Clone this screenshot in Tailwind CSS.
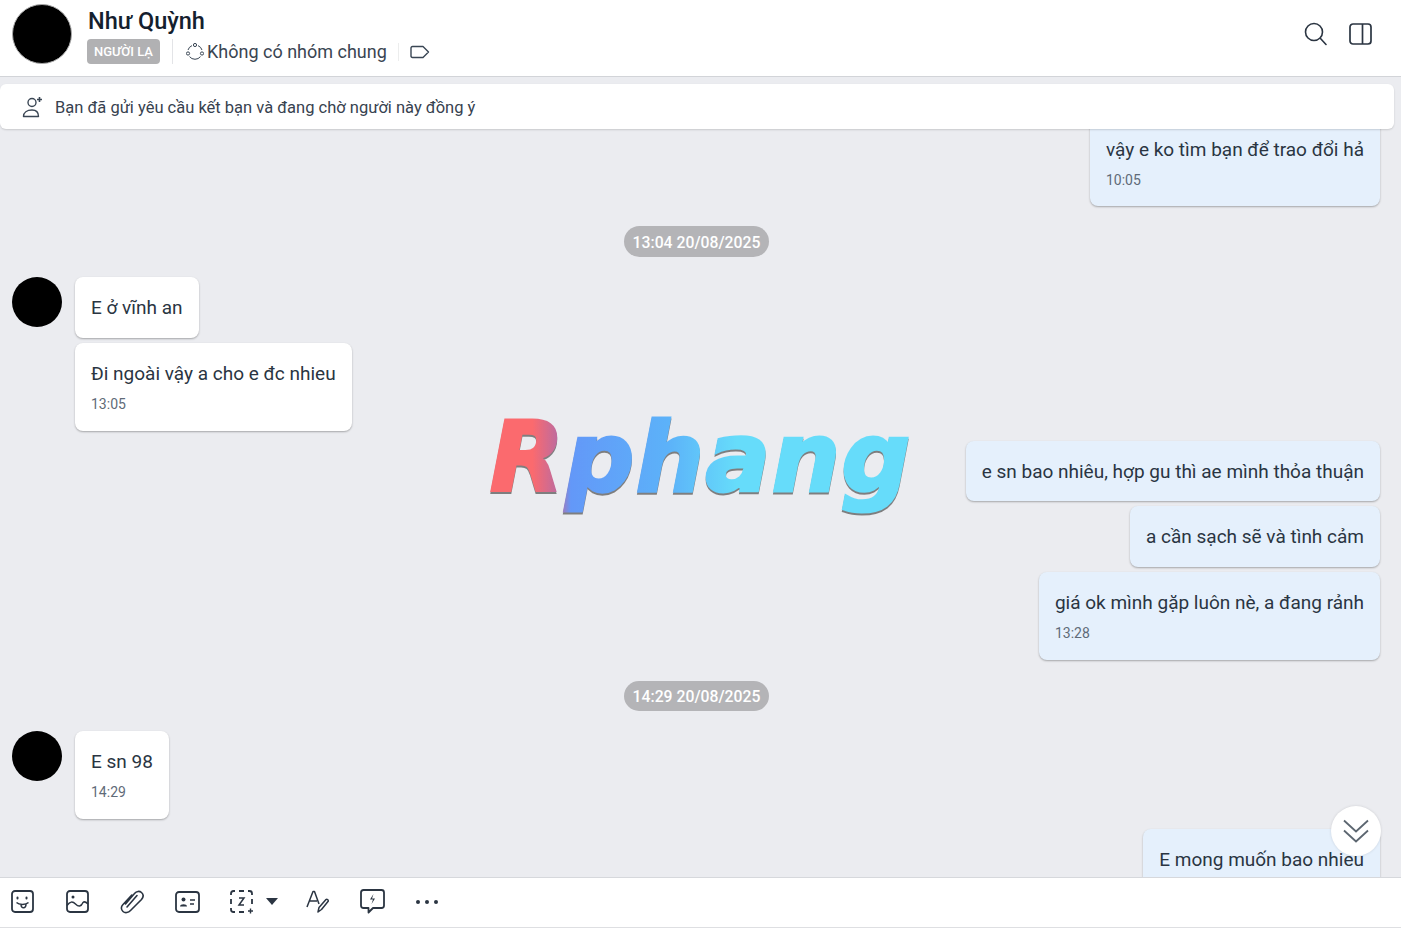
<!DOCTYPE html>
<html lang="vi">
<head>
  <meta charset="UTF-8">
  <title>Như Quỳnh</title>
  <script src="https://cdn.jsdelivr.net/npm/@tailwindcss/browser@4"></script>
</head>
<body class="h-[933px] w-[1401px] overflow-hidden bg-white font-['Roboto',sans-serif] text-[#2a3542]">
  <div class="flex h-[933px] flex-col">
    <!-- header -->
    <header class="flex h-[77px] shrink-0 items-start border-b border-[#d2d4d8] bg-white pl-3 pr-[29px]">
      <div class="mt-1 h-[60px] w-[60px] shrink-0 rounded-full border border-[#a8a8a8] bg-black"></div>
      <div class="ml-[15px] flex-1">
        <div class="mt-[6px] ml-px h-[30px] text-[23.500px] font-medium leading-[30px] text-[#14202e]">Như Quỳnh</div>
        <div class="mt-[3px] flex h-[25px] items-center">
          <span class="flex h-[25px] w-[73px] items-center justify-center rounded bg-[#b1b1b3] text-[13px] font-medium text-white">NGƯỜI LẠ</span>
          <span class="ml-3 h-[25px] w-px bg-[#e3e4e7]"></span>
          <svg class="ml-[13px]" width="18" height="18" viewBox="0 0 18 18" fill="none" stroke="#3a4654" stroke-width="1"><path d="M6 2.6A7 7 0 0 0 2 7M12 2.6A7 7 0 0 1 16 7M3.5 13.6A7 7 0 0 0 14.500 13.600"/><circle cx="9" cy="2" r="1.600"/><circle cx="2" cy="10.500" r="1.600"/><circle cx="16" cy="10.500" r="1.600"/></svg>
          <span class="ml-[3px] text-[18px] leading-[25px] text-[#3a4552]">Không có nhóm chung</span>
          <span class="ml-[11px] h-[18px] w-px bg-[#eceded]"></span>
          <svg class="ml-[11px]" width="20" height="14" viewBox="0 0 20 14" fill="none" stroke="#3a4654" stroke-width="1.400" stroke-linejoin="round"><path d="M2.500 1.500H13L18.500 7L13 12.500H2.500Q1 12.500 1 11V3Q1 1.500 2.500 1.500Z"/></svg>
        </div>
      </div>
      <div class="mt-[22px] flex items-center gap-[22px]">
        <svg width="23" height="24" viewBox="0 0 23 24" fill="none" stroke="#2b3542" stroke-width="1.600" stroke-linecap="round"><circle cx="10" cy="10" r="8.500"/><path d="M16.500 16.500L22 22.500"/></svg>
        <svg width="23" height="22" viewBox="0 0 23 22" fill="none" stroke="#2b3542" stroke-width="1.700"><rect x="1" y="1" width="21" height="20" rx="3"/><path d="M13.500 1V21"/></svg>
      </div>
    </header>

    <!-- chat -->
    <main class="relative min-h-0 flex-1 overflow-hidden bg-[#ebecf0]">
      <div class="flex flex-col items-stretch pl-3 pr-[21px] pt-[41px] text-[19px]">
        <div class="flex justify-end">
          <div class="h-[88px] rounded-lg bg-[#e5f0fc] px-4 pt-[20px] shadow-[0_1px_2px_rgba(0,0,0,0.3)]">
            <div class="leading-6">vậy e ko tìm bạn để trao đổi hả</div>
            <div class="mt-[8px] text-[14px] leading-5 text-[#5f6b78]">10:05</div>
          </div>
        </div>
        <div class="mt-5 flex justify-center pl-[1px]"><span class="flex h-[31px] w-[145px] items-center justify-center rounded-full bg-[#b4b4b7] pt-[2px] text-[15.750px] font-medium text-white">13:04 20/08/2025</span></div>
        <div class="mt-5 flex gap-[13px]">
          <div class="h-[50px] w-[50px] shrink-0 rounded-full bg-black"></div>
          <div class="flex flex-col items-start gap-[5px]">
            <div class="h-[61px] rounded-lg bg-white px-4 pt-[19px] leading-6 shadow-[0_1px_2px_rgba(0,0,0,0.3)]">E ở vĩnh an</div>
            <div class="h-[88px] rounded-lg bg-white px-4 pt-[19px] shadow-[0_1px_2px_rgba(0,0,0,0.3)]">
              <div class="leading-6">Đi ngoài vậy a cho e đc nhieu</div>
              <div class="mt-[8px] text-[14px] leading-5 text-[#5f6b78]">13:05</div>
            </div>
          </div>
        </div>
        <div class="mt-[10px] flex flex-col items-end gap-[5px]">
          <div class="h-[60px] rounded-lg bg-[#e5f0fc] px-4 pt-[19px] leading-6 shadow-[0_1px_2px_rgba(0,0,0,0.3)]">e sn bao nhiêu, hợp gu thì ae mình thỏa thuận</div>
          <div class="h-[61px] rounded-lg bg-[#e5f0fc] px-4 pt-[19px] leading-6 shadow-[0_1px_2px_rgba(0,0,0,0.3)]">a cần sạch sẽ và tình cảm</div>
          <div class="h-[88px] rounded-lg bg-[#e5f0fc] px-4 pt-[19px] shadow-[0_1px_2px_rgba(0,0,0,0.3)]">
            <div class="leading-6">giá ok mình gặp luôn nè, a đang rảnh</div>
            <div class="mt-[8px] text-[14px] leading-5 text-[#5f6b78]">13:28</div>
          </div>
        </div>
        <div class="mt-[21px] flex justify-center pl-[1px]"><span class="flex h-[30px] w-[145px] items-center justify-center rounded-full bg-[#b4b4b7] pt-px text-[15.750px] font-medium text-white">14:29 20/08/2025</span></div>
        <div class="mt-5 flex gap-[13px]">
          <div class="h-[50px] w-[50px] shrink-0 rounded-full bg-black"></div>
          <div class="h-[88px] rounded-lg bg-white px-4 pt-[19px] shadow-[0_1px_2px_rgba(0,0,0,0.3)]">
            <div class="leading-6">E sn 98</div>
            <div class="mt-[8px] text-[14px] leading-5 text-[#5f6b78]">14:29</div>
          </div>
        </div>
        <div class="mt-[10px] flex justify-end">
          <div class="h-[88px] rounded-lg bg-[#e5f0fc] px-4 pt-[19px] shadow-[0_1px_2px_rgba(0,0,0,0.3)]">
            <div class="leading-6">E mong muốn bao nhieu</div>
          </div>
        </div>
      </div>

      <!-- friend request banner -->
      <div class="absolute left-0 top-[7px] flex h-[45px] w-[1394px] items-center rounded-md bg-white pl-[22px] shadow-[0_1px_2px_rgba(0,0,0,0.15)]">
        <svg width="22" height="22" viewBox="0 0 22 22" fill="none" stroke="#3a4654" stroke-width="1.400"><circle cx="10" cy="6.500" r="4"/><path d="M1.500 20.500C1.500 16.500 5 14 10 14S16.500 16.500 16.500 20.500Z" stroke-linejoin="round"/><path d="M17.500 1V6M15 3.500H20" stroke-width="1.600"/></svg>
        <span class="ml-[11px] pt-[3px] text-[16.500px] text-[#37424f]">Bạn đã gửi yêu cầu kết bạn và đang chờ người này đồng ý</span>
      </div>

      <!-- watermark -->
      <div class="pointer-events-none absolute left-[490px] top-[316px] w-[425px] whitespace-nowrap bg-[linear-gradient(to_right,#fb6a6e_0%,#fb6a6e_10%,#bd6b9f_16%,#6398f8_19%,#5cb2f9_42%,#66dcfa_58%,#66dcfa_100%)] bg-clip-text font-['DejaVu_Sans',sans-serif] text-[96px] font-bold italic leading-[130px] tracking-[1.500px] text-transparent drop-shadow-[0_2px_0_rgba(90,90,90,0.75)] [-webkit-text-stroke:3px_transparent]">Rphang</div>

      <!-- scroll to bottom -->
      <button class="absolute left-[1331px] top-[729px] flex h-[50px] w-[50px] items-center justify-center rounded-full bg-white shadow-[0_0_3px_rgba(0,0,0,0.12)]">
        <svg width="26" height="26" viewBox="0 0 26 26" fill="none" stroke="#5c6670" stroke-width="1.800"><path d="M1 2.500L13 13.500L25 2.500M1 12.500L13 23.500L25 12.500"/></svg>
      </button>
    </main>

    <!-- toolbar -->
    <div class="flex h-[51px] shrink-0 items-center gap-[11px] border-t border-b border-t-[#d6d8dc] border-b-[#dedfe2] bg-white pb-[2px]">
      <button class="flex w-[44px] justify-center">
        <svg width="23" height="23" viewBox="0 0 23 23" fill="none" stroke="#2b3542" stroke-width="1.800"><rect x="1" y="1" width="21" height="21" rx="3"/><path d="M6.500 7.500V8.500M15.500 7.500V8.500" stroke-linecap="round" stroke-width="2"/><path d="M5.500 12.500C8 15 15 15 17.500 12.500M10 14.500C10 19 15 19 15 14" stroke-width="1.500"/></svg>
      </button>
      <button class="flex w-[44px] justify-center">
        <svg width="23" height="23" viewBox="0 0 23 23" fill="none" stroke="#2b3542" stroke-width="1.800"><rect x="1" y="1" width="21" height="21" rx="3"/><circle cx="7" cy="7" r="1.500" fill="#2b3542" stroke="none"/><path d="M1 15.500C4 11.500 6.500 11 9.500 14S15 17 17 12.500C18.500 11 20.500 12.500 22 14" stroke-width="1.500"/></svg>
      </button>
      <button class="flex w-[44px] justify-center">
        <svg width="24" height="24" viewBox="0 0 24 24" fill="none" stroke="#2b3542" stroke-width="1.600" stroke-linecap="round" stroke-linejoin="round"><path d="M5.500 14L14.500 3.500C16.500 1 19.500 .8 21.500 2.500S23.500 7 21.500 9.500L10.500 20.500C8.500 22.800 5 23.300 3 21.500S.8 17 2.800 14.800L11.800 5"/><path d="M17 5.500L7 17"/></svg>
      </button>
      <button class="flex w-[44px] justify-center">
        <svg width="25" height="22" viewBox="0 0 25 22" fill="none" stroke="#2b3542" stroke-width="1.800"><rect x="1" y="1" width="23" height="20" rx="3"/><circle cx="8.500" cy="8.500" r="2" fill="#2b3542" stroke="none"/><path d="M5 15.500C5 12.500 12 12.500 12 15.500Z" fill="#2b3542" stroke="none"/><path d="M15 9H20M15 13H19" stroke-width="1.500"/></svg>
      </button>
      <div class="flex w-[64px] items-center">
        <span class="flex w-[44px] justify-center">
          <svg width="24" height="24" viewBox="0 0 24 24" fill="none" stroke="#2b3542" stroke-width="1.800"><path d="M5 1H3.500Q1 1 1 3.500V5M9 1H14M18 1H19.500Q22 1 22 3.500V5M1 9V14M22 9V14M1 18V19.500Q1 22 3.500 22H5M9 22H14"/><path d="M9 8H14L9 15H14" stroke-width="1.500"/><path d="M20.500 18.500V23.500M18 21H23" stroke-width="1.400"/></svg>
        </span>
        <span class="ml-[2px] h-0 w-0 border-x-[6px] border-t-[7px] border-x-transparent border-t-[#2b3542]"></span>
      </div>
      <button class="flex w-[44px] justify-center">
        <svg width="23" height="23" viewBox="0 0 23 23" fill="none" stroke="#2b3542" stroke-width="1.500" stroke-linejoin="round"><path d="M1 17L7 1.500H8.500L13 14M3.500 11H11"/><path d="M12 22L13 17.500L20 9.500C21 8.500 23 10.500 22 11.500L15.500 19.500Z"/></svg>
      </button>
      <button class="flex w-[44px] justify-center">
        <svg width="25" height="25" viewBox="0 0 25 25" fill="none" stroke="#2b3542" stroke-width="1.800" stroke-linejoin="round"><path d="M3.500 1H21.500Q24 1 24 3.500V16.500Q24 19 21.500 19H13L8.500 23.500V19H3.500Q1 19 1 16.500V3.500Q1 1 3.500 1Z"/><path d="M13.500 5L10 10.500H13L11.500 15L15 9.500H12Z" fill="#2b3542" stroke="none"/></svg>
      </button>
      <button class="flex w-[44px] items-center justify-center gap-[5px]">
        <span class="h-[4px] w-[4px] rounded-full bg-[#2b3542]"></span>
        <span class="h-[4px] w-[4px] rounded-full bg-[#2b3542]"></span>
        <span class="h-[4px] w-[4px] rounded-full bg-[#2b3542]"></span>
      </button>
    </div>
    <div class="h-[5px] shrink-0 bg-white"></div>
  </div>
</body>
</html>
